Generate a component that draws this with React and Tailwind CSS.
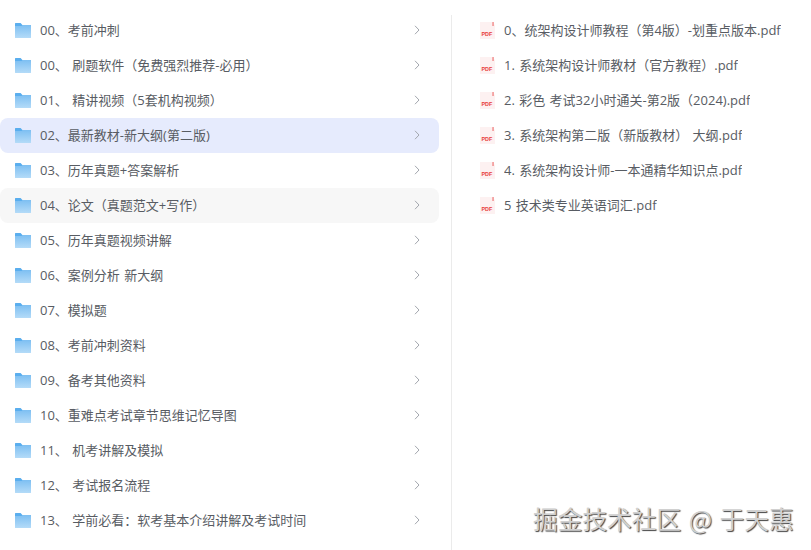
import React from "react";

const folders = [
  { name: "00、考前冲刺" },
  { name: "00、 刷题软件（免费强烈推荐-必用）" },
  { name: "01、 精讲视频（5套机构视频）" },
  { name: "02、最新教材-新大纲(第二版)", state: "active" },
  { name: "03、历年真题+答案解析" },
  { name: "04、论文（真题范文+写作）", state: "hover" },
  { name: "05、历年真题视频讲解" },
  { name: "06、案例分析 新大纲" },
  { name: "07、模拟题" },
  { name: "08、考前冲刺资料" },
  { name: "09、备考其他资料" },
  { name: "10、重难点考试章节思维记忆导图" },
  { name: "11、 机考讲解及模拟" },
  { name: "12、 考试报名流程" },
  { name: "13、 学前必看：软考基本介绍讲解及考试时间" },
];

const files = [
  "0、统架构设计师教程（第4版）-划重点版本.pdf",
  "1. 系统架构设计师教材（官方教程）.pdf",
  "2. 彩色 考试32小时通关-第2版（2024).pdf",
  "3. 系统架构第二版（新版教材） 大纲.pdf",
  "4. 系统架构设计师-一本通精华知识点.pdf",
  "5 技术类专业英语词汇.pdf",
];

const FolderIcon = () => (
  <svg width="16" height="15" viewBox="0 0 16 15" className="shrink-0">
    <defs>
      <linearGradient id="folderBody" x1="0" y1="0" x2="0" y2="1">
        <stop offset="0" stopColor="#7dbff2" />
        <stop offset="1" stopColor="#b4dbf8" />
      </linearGradient>
    </defs>
    <path d="M0 .6A.6.6 0 0 1 .6 0h5l1.8 2H15.4a.6.6 0 0 1 .6.6V5H0z" fill="#5aaeee" />
    <path d="M0 3h6.6l1-1H16v12.4a.6.6 0 0 1-.6.6H.6a.6.6 0 0 1-.6-.6z" fill="url(#folderBody)" />
  </svg>
);

const PdfIcon = () => (
  <svg width="15" height="17" viewBox="0 0 15 17" className="shrink-0">
    <path d="M0 0h12l3 3v14H0z" fill="#fdf1f1" />
    <path d="M12.4 0h1.3v4h-1.3z" fill="#f08080" />
    <text
      x="1.5"
      y="14"
      fontSize="5.4"
      fontWeight="700"
      fill="#e8403c"
      fontFamily="'Liberation Sans', sans-serif"
    >
      PDF
    </text>
  </svg>
);

const Chevron = () => (
  <svg width="6" height="10" viewBox="0 0 6 10" fill="none" className="shrink-0">
    <path d="M1 0.8 5 5 1 9.2" stroke="#a3a7ae" strokeWidth="1" />
  </svg>
);

const FolderRow = ({ name, state }) => (
  <div
    className={`flex h-[35px] items-center rounded-lg pl-[15px] pr-[19px] ${
      state === "active" ? "bg-[#e6ebfd]" : state === "hover" ? "bg-[#f7f7f7]" : ""
    }`}
  >
    <FolderIcon />
    <span className="ml-[9px] flex-1 truncate pt-px">{name}</span>
    <Chevron />
  </div>
);

const FileRow = ({ name }) => (
  <div className="flex h-[35px] items-center pl-[28px]">
    <PdfIcon />
    <span className="ml-[9px] truncate pt-px">{name}</span>
  </div>
);

export default function App() {
  return (
    <div className="relative flex h-[550px] w-[811px] overflow-hidden bg-white font-['Open_Sans','Noto_Sans_CJK_SC',sans-serif] text-[13px] text-[#585c63] [word-spacing:1px]">
      <div className="w-[439px] shrink-0 pt-[12.5px]">
        {folders.map((folder, i) => (
          <FolderRow key={i} name={folder.name} state={folder.state} />
        ))}
      </div>
      <div className="ml-[12px] mt-[15px] flex-1 border-l border-[#ebebeb]">
        <div className="-mt-[2.5px]">
          {files.map((file, i) => (
            <FileRow key={i} name={file} />
          ))}
        </div>
      </div>
      {/* watermark */}
      <div className="absolute left-[533px] top-[501px] whitespace-nowrap font-['Noto_Sans_CJK_SC',sans-serif] text-[24.7px] leading-[34px] text-[#d0d0d0] [text-shadow:1px_1px_1px_#444,-1px_-1px_0_#fff] [word-spacing:2px]">
        掘金技术社区 @ 于天惠
      </div>
    </div>
  );
}
